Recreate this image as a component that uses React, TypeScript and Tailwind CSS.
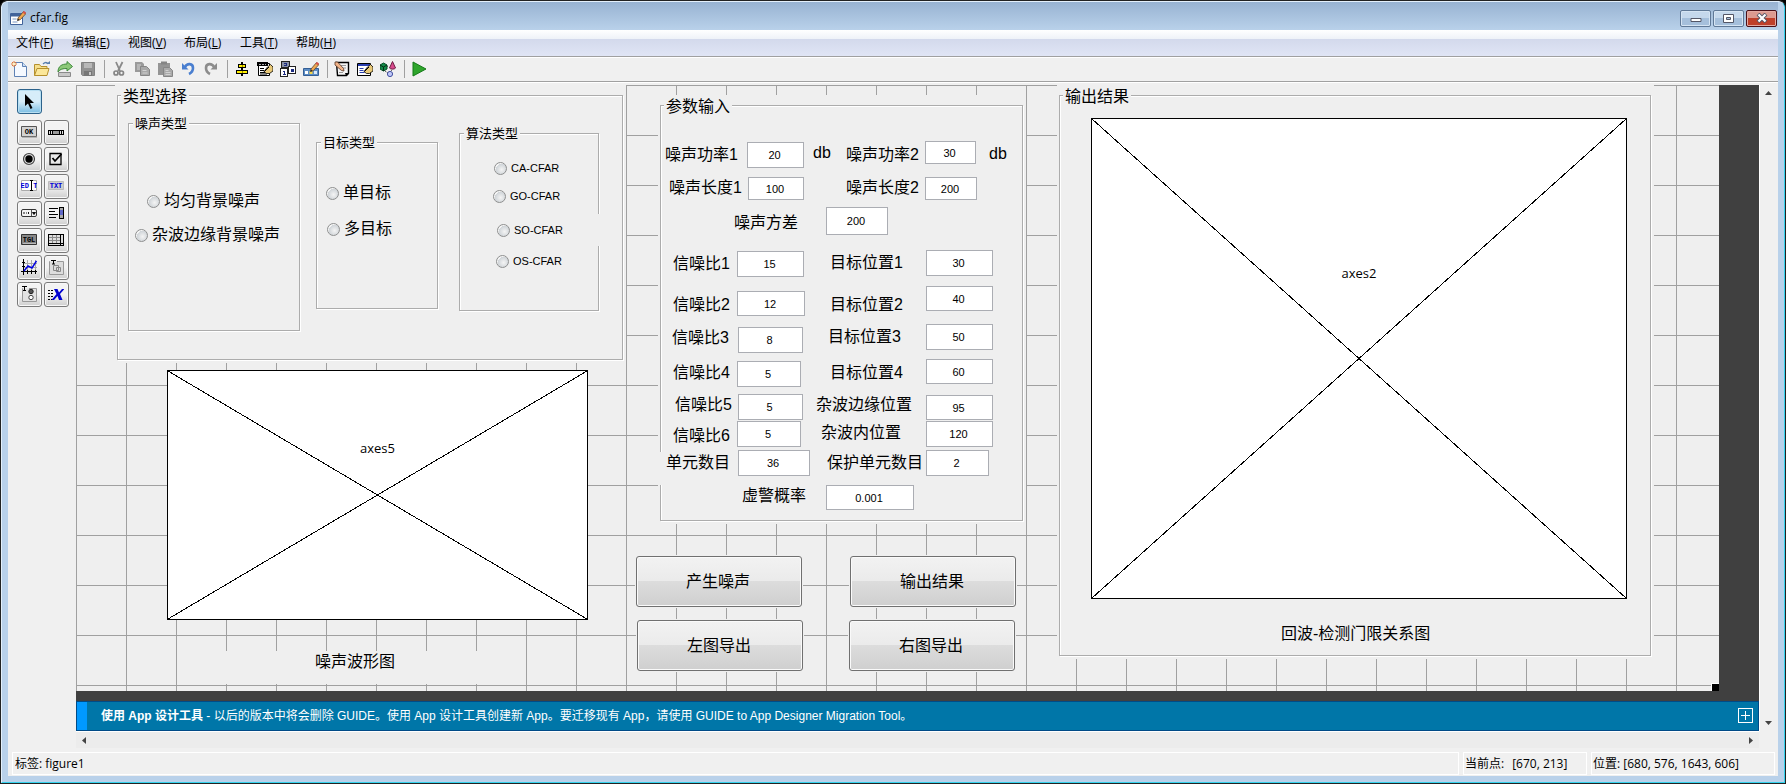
import React from "react";

const UI_FONT = "font-['Open_Sans','Noto_Sans_CJK_SC',sans-serif]";
const FORM_FONT = "font-['Liberation_Sans','Noto_Sans_CJK_SC',sans-serif]";

type Box = { x: number; y: number; w: number; h: number };

// Position of a component on the figure, in figure pixels
const place = ({ x, y, w, h }: Box): React.CSSProperties => ({
  left: x,
  top: y,
  width: w,
  height: h,
});

const menus = [
  ["文件", "F"],
  ["编辑", "E"],
  ["视图", "V"],
  ["布局", "L"],
  ["工具", "T"],
  ["帮助", "H"],
];

const Pencil = () => (
  <>
    <path d="M7.5 10.5 L8 8 L13.5 1.5 L16 3.5 L10.5 9.5 Z" fill="#f0a850" stroke="#5b4630" strokeWidth="0.8" />
    <path d="M12.5 2.5 L14 1 L16 2.6 L14.8 4.2 Z" fill="#d9534a" />
    <path d="M7.3 10.8 L8 8.6 L9.6 10 Z" fill="#222" />
  </>
);

const Form = () => (
  <>
    <path d="M1.5 2.5h11v12h-11z" fill="#fff" stroke="#000" />
    <path d="M3 7.5h4M3 9.5h4M3 11.5h5M3 13h7" stroke="#000" />
  </>
);

const Hand = () => (
  <>
    <path d="M7 10.500l3.500-4.500 3-2.500 2.500 2.500v4l-3.500 2.500h-3z" fill="#e8c878" stroke="#000" strokeWidth="0.8" />
    <path d="M7.500 10.500l4.500-4.500" stroke="#000" />
  </>
);

const toolIcons: Record<string, React.ReactNode> = {
  新建图窗: (
    <>
      <path d="M3.5 1.5h8l4 4v10h-12z" fill="#f5f9ff" stroke="#5f82b4" />
      <path d="M11.5 1.5v4h4" fill="#cfe0f5" stroke="#5f82b4" />
      <path d="M3 0v6M0 3h6M1 1l4 4M5 1l-4 4" stroke="#e0763a" strokeWidth="1" />
      <circle cx="3" cy="3" r="1.3" fill="#fff3c0" />
    </>
  ),
  打开图窗: (
    <>
      <path d="M.5 14.5v-11h5l1.5 2h6v3" fill="#f6df8c" stroke="#b58f2c" />
      <path d="M.5 14.5l2.5-7h12l-2 7z" fill="#fbe79a" stroke="#b58f2c" />
      <path d="M9 3c2-2 4-2 5 0" fill="none" stroke="#5a7fae" strokeWidth="1.3" />
      <path d="M12 3h4v-3z" fill="#5a7fae" />
    </>
  ),
  保存为: (
    <>
      <path d="M1.5 11.5h12v4h-12z" fill="#c8c8c8" stroke="#8a8a8a" />
      <path d="M1 11c0-6 4-8 9-8V0.5l5.5 5L10 10V7.5c-4 0-7 .5-9 3.5z" fill="#8cc878" stroke="#3f8a3c" />
    </>
  ),
  保存: (
    <>
      <path d="M1.5 1.5h13v13h-12l-1-1z" fill="#929292" stroke="#828282" />
      <path d="M4 2h8v5H4z" fill="#b8b8b8" />
      <path d="M4 10h8v5H4z" fill="#777" />
      <path d="M9 11h2v3H9z" fill="#c8c8c8" />
    </>
  ),
  剪切: (
    <>
      <path d="M5 1l4 9M11.5 1L7 10" stroke="#8a8a8a" strokeWidth="1.8" />
      <circle cx="5" cy="12" r="2" fill="none" stroke="#858585" strokeWidth="1.7" />
      <circle cx="10.5" cy="12" r="2" fill="none" stroke="#858585" strokeWidth="1.7" />
    </>
  ),
  复制: (
    <>
      <path d="M1 1h7l2 2v8H1z" fill="#9a9a9a" />
      <path d="M6.5 5.5h6l3 3v6h-9z" fill="#a8a8a8" stroke="#868686" />
      <path d="M3 4h4M3 6h3M3 8h3M8.500 9.500h4M8.500 12h5" stroke="#d2d2d2" />
    </>
  ),
  粘贴: (
    <>
      <path d="M1 2h12v12H1z" fill="#959595" />
      <path d="M4 0.500h6v3H4z" fill="#858585" />
      <path d="M6.500 6.500h6l3 3v6h-9z" fill="#aaa" stroke="#868686" />
      <path d="M8.500 9.500h3M8.500 11.500h5M8.500 13.500h5" stroke="#d0d0d0" />
    </>
  ),
  撤消: (
    <>
      <path d="M5 6c2-4 8-4 8 1 0 3-2 5-4 6" fill="none" stroke="#4a7fd0" strokeWidth="2.6" />
      <path d="M2 2v6.500h6.500z" fill="#4a7fd0" />
    </>
  ),
  重做: (
    <>
      <path d="M11 6c-2-4-8-4-8 1 0 3 2 5 4 6" fill="none" stroke="#8c8c8c" strokeWidth="2.600" />
      <path d="M14 2v6.500H7.500z" fill="#8c8c8c" />
    </>
  ),
  对齐对象: (
    <g shapeRendering="crispEdges">
      <path d="M7 1h2v14H7z" fill="#000" />
      <path d="M4.500 3.500h7v3h-7zM2.500 9.500h11v3h-11z" fill="#ffef00" stroke="#000" />
      <path d="M8 4v2M8 10v2" stroke="#a09000" />
    </g>
  ),
  菜单编辑器: (
    <>
      <Form />
      <path d="M0 1h11v4H0z" fill="#000" />
      <path d="M2 3.500h2M5 3.500h2M8 3.500h1" stroke="#aaa" />
      <Hand />
    </>
  ),
  "Tab 键顺序编辑器": (
    <g shapeRendering="crispEdges">
      <path d="M1.500.5h8v6h-8z" fill="#8890a8" stroke="#222" />
      <path d="M.5 7.500h7v8h-7zM8.500 5.500h7v7h-7z" fill="#fff" stroke="#222" />
      <path d="M3 10.500h1v3M3 13.500h3M11 8.500h2v1h-2v1h3M4 2.500h2v2H4" fill="none" stroke="#1a2a80" />
    </g>
  ),
  工具栏编辑器: (
    <>
      <path d="M.5 7.500h15v7H.5z" fill="#5c8cc4" stroke="#345f96" />
      <path d="M2 10h3v3H2z" fill="#fff" />
      <path d="M6.500 10h3v3h-3z" fill="#f5d648" />
      <path d="M11 10h3v3h-3z" fill="#d8e8f8" />
      <Pencil />
    </>
  ),
  编辑器: (
    <>
      <path d="M2.500 1.500h12v11l-2 2h-9z" fill="#f4f4f4" stroke="#000" strokeWidth="1.400" />
      <path d="M7 4.500h5M9 7h3M5 11.500h4" stroke="#999" />
      <path d="M1 1h2.500l6 6.500.5 2.500-2.500-.5L1 4z" fill="#f2b489" stroke="#553322" strokeWidth="0.800" />
      <path d="M11 12h4l-3 3z" fill="#000" />
    </>
  ),
  属性检查器: (
    <>
      <path d="M.5 2.500h13v12H.5z" fill="#fff" stroke="#000" />
      <path d="M1 3h12v2H1z" fill="#2a3fb0" />
      <path d="M2.500 7.500h4M2.500 9.500h4M2.500 11.500h5" stroke="#2a3fb0" />
      <Hand />
    </>
  ),
  对象浏览器: (
    <>
      <path d="M0 4l3.500-2 3.500 2v4L3.500 10 0 8z" fill="#128a48" stroke="#044d24" />
      <path d="M0 4l3.500 2L7 4M3.500 6v4" fill="none" stroke="#042d14" />
      <path d="M12.500.5l3 6.500c-1 1.500-5 1.500-6 0z" fill="#d84a8c" stroke="#6a1a40" />
      <circle cx="10" cy="13" r="2.600" fill="#c0c8f8" stroke="#4450a0" />
      <path d="M5 10l3 2M8 5l-1 1M12 9l-1 1" stroke="#333" strokeDasharray="1 1" />
    </>
  ),
  运行图窗: <path d="M2 1v14l13-7z" fill="#2fa52c" stroke="#157a18" />,
};

const toolbarGroups = [
  ["新建图窗", "打开图窗", "保存为", "保存"],
  ["剪切", "复制", "粘贴", "撤消", "重做"],
  ["对齐对象", "菜单编辑器", "Tab 键顺序编辑器", "工具栏编辑器"],
  ["编辑器", "属性检查器", "对象浏览器"],
  ["运行图窗"],
];

const IconText = ({ children, fill }: { children: string; fill: string }) => (
  <text
    x="8"
    y="10"
    fontSize="7"
    fontWeight="bold"
    textAnchor="middle"
    fontFamily="Liberation Mono, monospace"
    fill={fill}
  >
    {children}
  </text>
);

const paletteIcons: [string, React.ReactNode][] = [
  [
    "普通按钮",
    <>
      <path d="M.5 2.500h15v10H.5z" fill="#d2d2d2" stroke="#555" />
      <path d="M1 12.500h15v1H1z" fill="#888" />
      <IconText fill="#000">OK</IconText>
    </>,
  ],
  [
    "滑块",
    <g shapeRendering="crispEdges">
      <path d="M0 6h16v5H0z" fill="#000" />
      <path d="M1 7h1v3H1zM3 7h1v3H3zM12 7h1v3h-1zM14 7h1v3h-1z" fill="#ddd" />
      <path d="M5 7h6v3H5z" fill="#999" />
    </g>,
  ],
  [
    "单选按钮",
    <>
      <circle cx="8" cy="8" r="5.500" fill="#ddd" stroke="#444" strokeWidth="1.200" />
      <circle cx="8" cy="8" r="3.700" fill="#000" />
    </>,
  ],
  [
    "复选框",
    <>
      <path d="M2 2.500h11v11H2z" fill="#e8e8e8" stroke="#000" strokeWidth="1.300" />
      <path d="M4.500 7l2.500 3 6.500-7" fill="none" stroke="#000" strokeWidth="1.800" />
    </>,
  ],
  [
    "可编辑文本",
    <>
      <path d="M.5 2.500h15v10H.5z" fill="#fff" stroke="#aaa" />
      <IconText fill="#0000d8">ED T</IconText>
      <path d="M10.500 3v9M9 2.500h3M9 12.500h3" stroke="#000" />
    </>,
  ],
  [
    "静态文本",
    <>
      <path d="M.5 3.500h15v8H.5z" fill="#cfcfcf" stroke="#bbb" />
      <IconText fill="#0000d8">TXT</IconText>
    </>,
  ],
  [
    "弹出式菜单",
    <>
      <rect x="0.500" y="4.500" width="15" height="7" rx="1.500" fill="#f4f4f4" stroke="#333" />
      <path d="M10.500 5v6" stroke="#555" />
      <path d="M3 7v2M5 8h1M7.500 7v2M11.500 7.500h3l-1.500 2z" stroke="#000" strokeWidth="0.900" />
    </>,
  ],
  [
    "列表框",
    <g shapeRendering="crispEdges">
      <path d="M1 3.500h9M1 6.500h6M1 9.500h9M1 12.500h7" stroke="#000" />
      <path d="M11.500 2.500h4v11h-4z" fill="#aaa" stroke="#000" />
      <path d="M12 5h3v5h-3z" fill="#6068c8" />
    </g>,
  ],
  [
    "切换按钮",
    <>
      <path d="M.5 2.500h15v10H.5z" fill="#888" stroke="#333" />
      <path d="M2 11.500h13" stroke="#bbb" />
      <IconText fill="#000">TGL</IconText>
    </>,
  ],
  [
    "表",
    <g shapeRendering="crispEdges">
      <path d="M.5 2.500h15v11H.5z" fill="#ddd" stroke="#000" />
      <path d="M1 5.500h11M1 8.500h11M4.500 3v8M8.500 3v8" stroke="#888" />
      <path d="M12.500 2v12M1 11.500h14" stroke="#000" />
    </g>,
  ],
  [
    "坐标区",
    <>
      <path d="M6.500 1v13M10.500 1v13M14.500 1v13M3 4.500h13M3 8.500h13" stroke="#aaa" />
      <path d="M2.500 0v16M0 12.500h16M1 3.500h3M1 7.500h3M6.500 11v4M10.500 11v4M14.500 11v4" stroke="#000" />
      <path d="M3 12l4-5 4 2 4.500-7" fill="none" stroke="#0000e0" strokeWidth="1.500" />
    </>,
  ],
  [
    "面板",
    <>
      <path d="M2 2.500H1.500v13h14v-13H9" fill="#ddd" stroke="#999" />
      <path d="M5.500 6.500h5v5h-5zM8.500 8.500h4v4h-4z" fill="#ddd" stroke="#888" />
      <path d="M3 1.500h5M5.500 1v4M4 5h3" stroke="#000" />
    </>,
  ],
  [
    "按钮组",
    <>
      <path d="M2 2.500H1.500v13h14v-13H8" fill="#e2e2e2" stroke="#999" />
      <circle cx="10" cy="5.500" r="2.200" fill="#555" stroke="#222" />
      <circle cx="10" cy="11.500" r="2.200" fill="#fff" stroke="#444" />
      <path d="M1 .5h5M3.500 0v5M2 4.500h3" stroke="#000" />
    </>,
  ],
  [
    "ActiveX 控件",
    <>
      <path d="M0 4.500h5M0 7.500h5M0 10.500h5M0 13.500h4" stroke="#000" strokeDasharray="2 1" />
      <path d="M6 3h3.500l1.500 3.500L14 3h2.500l-4.500 5 2.500 6H11l-1.500-4-3.500 4H3.500l5-6z" fill="#0000d0" />
    </>,
  ],
];

const frames: (Box & { title: string; titleClass: string; bg: Box })[] = [
  { title: "类型选择", titleClass: "text-[16px] -top-[11px] left-[3px]", x: 41, y: 10, w: 506, h: 265, bg: { x: 39, y: 0, w: 511, h: 278 } },
  { title: "噪声类型", titleClass: "text-[13px] -top-3 left-1", x: 52, y: 38, w: 172, h: 208, bg: { x: 52, y: 38, w: 172, h: 208 } },
  { title: "目标类型", titleClass: "text-[13px] -top-3 left-1", x: 240, y: 57, w: 122, h: 167, bg: { x: 240, y: 57, w: 122, h: 167 } },
  { title: "算法类型", titleClass: "text-[13px] -top-3 left-1", x: 383, y: 48, w: 140, h: 178, bg: { x: 383, y: 48, w: 140, h: 178 } },
  { title: "参数输入", titleClass: "text-[16px] -top-[11px] left-[3px]", x: 584, y: 20, w: 363, h: 416, bg: { x: 582, y: 10, w: 368, h: 429 } },
  { title: "输出结果", titleClass: "text-[16px] -top-[11px] left-[3px]", x: 983, y: 10, w: 592, h: 561, bg: { x: 981, y: 0, w: 597, h: 574 } },
];

// Opaque control areas that hide the grid or a frame edge below them
const opaqueAreas: Box[] = [
  { x: 420, y: 129, w: 104, h: 32 },
  { x: 582, y: 367, w: 76, h: 33 },
  { x: 150, y: 566, w: 260, h: 33 },
];

const radios = [
  { group: "noise", text: "均匀背景噪声", x: 71, y: 116, size: "text-[16px]" },
  { group: "noise", text: "杂波边缘背景噪声", x: 59, y: 150, size: "text-[16px]" },
  { group: "target", text: "单目标", x: 250, y: 108, size: "text-[16px]" },
  { group: "target", text: "多目标", x: 251, y: 144, size: "text-[16px]" },
  { group: "algorithm", text: "CA-CFAR", x: 418, y: 83, size: "text-[11px]" },
  { group: "algorithm", text: "GO-CFAR", x: 417, y: 111, size: "text-[11px]" },
  { group: "algorithm", text: "SO-CFAR", x: 421, y: 145, size: "text-[11px]" },
  { group: "algorithm", text: "OS-CFAR", x: 420, y: 176, size: "text-[11px]" },
];

const fields = [
  { id: "power1", label: "噪声功率1", lx: 589, ly: 70, value: "20", x: 671, y: 57, w: 57, h: 26 },
  { id: "power2", label: "噪声功率2", lx: 770, ly: 70, value: "30", x: 849, y: 56, w: 51, h: 23 },
  { id: "length1", label: "噪声长度1", lx: 593, ly: 103, value: "100", x: 672, y: 92, w: 56, h: 23 },
  { id: "length2", label: "噪声长度2", lx: 770, ly: 103, value: "200", x: 849, y: 92, w: 52, h: 23 },
  { id: "variance", label: "噪声方差", lx: 658, ly: 138, value: "200", x: 750, y: 122, w: 62, h: 28 },
  { id: "snr1", label: "信噪比1", lx: 597, ly: 179, value: "15", x: 661, y: 166, w: 67, h: 26 },
  { id: "pos1", label: "目标位置1", lx: 754, ly: 178, value: "30", x: 850, y: 165, w: 67, h: 26 },
  { id: "snr2", label: "信噪比2", lx: 597, ly: 220, value: "12", x: 661, y: 206, w: 68, h: 25 },
  { id: "pos2", label: "目标位置2", lx: 754, ly: 220, value: "40", x: 850, y: 201, w: 67, h: 25 },
  { id: "snr3", label: "信噪比3", lx: 596, ly: 253, value: "8", x: 662, y: 242, w: 65, h: 26 },
  { id: "pos3", label: "目标位置3", lx: 752, ly: 252, value: "50", x: 850, y: 239, w: 67, h: 26 },
  { id: "snr4", label: "信噪比4", lx: 597, ly: 288, value: "5", x: 661, y: 276, w: 64, h: 26 },
  { id: "pos4", label: "目标位置4", lx: 754, ly: 288, value: "60", x: 850, y: 274, w: 67, h: 25 },
  { id: "snr5", label: "信噪比5", lx: 599, ly: 320, value: "5", x: 662, y: 309, w: 65, h: 26 },
  { id: "edge", label: "杂波边缘位置", lx: 740, ly: 320, value: "95", x: 850, y: 310, w: 67, h: 25 },
  { id: "snr6", label: "信噪比6", lx: 597, ly: 351, value: "5", x: 661, y: 336, w: 64, h: 26 },
  { id: "inner", label: "杂波内位置", lx: 745, ly: 348, value: "120", x: 850, y: 336, w: 67, h: 26 },
  { id: "cells", label: "单元数目", lx: 590, ly: 378, value: "36", x: 662, y: 365, w: 72, h: 26 },
  { id: "guard", label: "保护单元数目", lx: 751, ly: 378, value: "2", x: 850, y: 365, w: 63, h: 26 },
  { id: "pfa", label: "虚警概率", lx: 666, ly: 411, value: "0.001", x: 750, y: 400, w: 88, h: 25 },
];

const captions = [
  { text: "db", x: 737, y: 68 },
  { text: "db", x: 913, y: 69 },
  { text: "噪声波形图", x: 239, y: 577 },
  { text: "回波-检测门限关系图", x: 1205, y: 549 },
];

const pushButtons = [
  { text: "产生噪声", x: 560, y: 471, w: 166, h: 51 },
  { text: "输出结果", x: 774, y: 471, w: 166, h: 51 },
  { text: "左图导出", x: 561, y: 535, w: 166, h: 51 },
  { text: "右图导出", x: 773, y: 535, w: 166, h: 51 },
];

const axes = [
  { name: "axes5", x: 91, y: 285, w: 421, h: 250, labelY: 77 },
  { name: "axes2", x: 1015, y: 33, w: 536, h: 481, labelY: 154 },
];

const TitleBar = () => (
  <header className="flex h-7 shrink-0 items-center justify-between bg-gradient-to-b from-[#98b3d2] to-[#b9d1ea] pl-[2px] pr-px pt-1">
    <div className="flex items-center gap-1">
      <svg width="16" height="16" viewBox="0 0 16 16">
        <path d="M.5 3.500h12v11H.5z" fill="#fff" stroke="#41639a" />
        <path d="M1 4h11v2.500H1z" fill="#41639a" />
        <path d="M2.500 9h4M2.500 12h5" stroke="#7d99c4" />
        <Pencil />
      </svg>
      <h1 className="text-[12px] leading-4">cfar.fig</h1>
    </div>
    <div className="flex gap-[2px]">
      <button
        aria-label="最小化"
        className="flex h-[17px] w-[31px] items-center justify-center rounded-[2px] border border-[#5f7896] bg-gradient-to-b from-[#c5d8ec] from-50% to-[#a5bfdb] to-50% shadow-[inset_0_0_0_1px_#d5e4f3]"
      >
        <svg width="12" height="10" viewBox="0 0 12 10">
          <path d="M1 5.500h10v3H1z" fill="#fff" stroke="#535666" />
        </svg>
      </button>
      <button
        aria-label="最大化"
        className="flex h-[17px] w-[31px] items-center justify-center rounded-[2px] border border-[#5f7896] bg-gradient-to-b from-[#c5d8ec] from-50% to-[#a5bfdb] to-50% shadow-[inset_0_0_0_1px_#d5e4f3]"
      >
        <svg width="11" height="9" viewBox="0 0 11 9">
          <path d="M.5.5h10v8H.5z" fill="#fff" stroke="#535666" />
          <path d="M3.500 3.500h4v2h-4z" fill="#a5bfdb" stroke="#535666" />
        </svg>
      </button>
      <button
        aria-label="关闭"
        className="flex h-[17px] w-[31px] items-center justify-center rounded-[2px] border border-[#4a1018] bg-gradient-to-b from-[#dc9a90] from-50% to-[#bf402a] to-50% shadow-[inset_0_0_0_1px_#e3aaa2]"
      >
        <svg width="12" height="10" viewBox="0 0 12 10">
          <path d="M2 1l8 8M10 1l-8 8" stroke="#535666" strokeWidth="4" />
          <path d="M2.500 1.500l7 7M9.500 1.500l-7 7" stroke="#fff" strokeWidth="2.200" />
        </svg>
      </button>
    </div>
  </header>
);

const MenuBar = () => (
  <nav className="flex h-[26px] shrink-0 items-center gap-[18px] bg-[linear-gradient(#ffffff,#eef2f8_35%,#d3d9ec_35%,#e0e5f5)] pl-2">
    {menus.map(([name, key]) => (
      <button key={key} className="w-[38px] whitespace-nowrap text-left text-[12px] leading-4">
        {name}(<u>{key}</u>)
      </button>
    ))}
  </nav>
);

const Toolbar = () => (
  <div className="flex h-[29px] shrink-0 flex-col border-t border-[#a0a0a0]">
    <div className="flex h-[25px] shrink-0 items-start border-b border-t border-b-[#a0a0a0] border-t-white">
      {toolbarGroups.map((group, i) => (
        <React.Fragment key={group[0]}>
          {i > 0 && (
            <span className="flex h-[22px] w-2 items-center justify-center">
              <span className="h-[18px] w-px bg-[#a0a0a0]" />
            </span>
          )}
          {group.map((name) => (
            <button key={name} aria-label={name} className="flex h-[22px] w-[23px] items-center justify-center pr-px">
              <svg width="16" height="16" viewBox="0 0 16 16">
                {toolIcons[name]}
              </svg>
            </button>
          ))}
        </React.Fragment>
      ))}
    </div>
    <div className="h-px bg-white" />
  </div>
);

const Palette = () => (
  <aside className="flex w-[68px] shrink-0 flex-col gap-[6px] pl-[9px] pt-1">
    <button
      aria-label="选择"
      className="flex size-[25px] items-center justify-center rounded-[3px] border border-[#2c628b] bg-gradient-to-b from-[#d6edf9] from-50% to-[#79bde2] pb-px pr-px shadow-[inset_0_0_0_1px_#b8dff2]"
    >
      <svg width="16" height="16" viewBox="0 0 16 16">
        <path d="M4 1v12l3-2.500L9.500 16l2-1-2.500-5h4z" fill="#000" />
      </svg>
    </button>
    <div className="grid w-[52px] grid-cols-2 gap-[2px]">
      {paletteIcons.map(([name, icon]) => (
        <button
          key={name}
          aria-label={name}
          className="flex size-[25px] items-center justify-center rounded-[3px] border border-[#7a7a7a] bg-gradient-to-b from-[#f3f3f3] from-50% to-[#cfcfcf] pb-px pr-px shadow-[inset_0_0_0_1px_#f8f8f8]"
        >
          <svg width="16" height="16" viewBox="0 0 16 16">
            {icon}
          </svg>
        </button>
      ))}
    </div>
  </aside>
);

// The figure is a free canvas: each component sits where its author dropped it
const Figure = () => (
  <main
    className={`relative h-[606px] w-[1643px] shrink-0 bg-[#efefef] bg-[linear-gradient(to_right,#a0a0a0_1px,transparent_1px),linear-gradient(to_bottom,#a0a0a0_1px,transparent_1px)] bg-[size:50px_50px] ${FORM_FONT} text-black`}
  >
    {frames.map((f) => (
      <section key={f.title} aria-label={f.title}>
        <div className="absolute bg-[#efefef]" style={place(f.bg)} />
        <div
          className="absolute border border-[#acacac] shadow-[1px_1px_0_#fff,inset_1px_1px_0_#fff]"
          style={place(f)}
        >
          <h2 className={`absolute whitespace-nowrap bg-[#efefef] px-[2px] leading-6 ${f.titleClass}`}>{f.title}</h2>
        </div>
      </section>
    ))}

    {opaqueAreas.map((a) => (
      <div key={a.x} className="absolute bg-[#efefef]" style={place(a)} />
    ))}

    {radios.map((r) => (
      <label
        key={r.text}
        className={`absolute flex h-6 -translate-y-1/2 items-center gap-1 whitespace-nowrap ${r.size}`}
        style={{ left: r.x, top: r.y }}
      >
        <input
          type="radio"
          name={r.group}
          className="size-[13px] shrink-0 appearance-none rounded-full border border-[#8e8f8f] bg-[radial-gradient(circle_at_60%_60%,#f4f4f4,#cfd4d8_60%,#f4f4f4_62%)] checked:bg-[#2c628b]"
        />
        {r.text}
      </label>
    ))}

    {fields.map((f) => (
      <React.Fragment key={f.id}>
        <label
          htmlFor={f.id}
          className="absolute -translate-y-1/2 whitespace-nowrap text-[16px] leading-6"
          style={{ left: f.lx, top: f.ly }}
        >
          {f.label}
        </label>
        <input
          id={f.id}
          type="text"
          defaultValue={f.value}
          className="absolute border border-[#abadb3] bg-white pr-[2px] text-center text-[11px]"
          style={place(f)}
        />
      </React.Fragment>
    ))}

    {captions.map((c) => (
      <p
        key={c.x}
        className="absolute -translate-y-1/2 whitespace-nowrap text-[16px] leading-6"
        style={{ left: c.x, top: c.y }}
      >
        {c.text}
      </p>
    ))}

    {pushButtons.map((b) => (
      <button
        key={b.x}
        className="absolute rounded-[3px] border border-[#707070] bg-[linear-gradient(#f2f2f2,#ebebeb_48%,#dddddd_48%,#cfcfcf)] pr-[2px] text-[16px] shadow-[0_0_0_1px_#efefef,inset_0_0_0_1px_#fafafa]"
        style={place(b)}
      >
        {b.text}
      </button>
    ))}

    {axes.map((a) => (
      <div key={a.name} className="absolute border border-black bg-white" style={place(a)}>
        <svg className="h-full w-full" viewBox="0 0 100 100" preserveAspectRatio="none" shapeRendering="crispEdges">
          <path d="M0 0L100 100M100 0L0 100" stroke="#000" vectorEffect="non-scaling-stroke" />
        </svg>
        <span
          className={`absolute left-1/2 -translate-x-1/2 -translate-y-1/2 text-[13px] leading-4 ${UI_FONT}`}
          style={{ top: a.labelY }}
        >
          {a.name}
        </span>
      </div>
    ))}

    <span className="absolute bottom-0 right-0 size-2 border-l border-t border-white bg-black" />
  </main>
);

const Banner = () => (
  <div
    className={`flex h-[30px] shrink-0 items-stretch border border-[#004b87] bg-[#0076a8] ${FORM_FONT} text-[12px] text-white`}
  >
    <span className="w-[10px] shrink-0 bg-[#0099ff]" />
    <p className="flex-1 self-center whitespace-nowrap pl-[14px] leading-4">
      <b>使用 App 设计工具</b> - 以后的版本中将会删除 GUIDE。使用 App 设计工具创建新 App。要迁移现有 App，请使用{" "}
      <a href="#migrate">GUIDE to App Designer Migration Tool</a>。
    </p>
    <button aria-label="展开" className="mb-[2px] mr-[5px] flex size-[15px] items-center justify-center self-center border border-white">
      <svg width="9" height="9" viewBox="0 0 9 9" shapeRendering="crispEdges">
        <path d="M4.500 0v9M0 4.500h9" stroke="#fff" />
      </svg>
    </button>
  </div>
);

const ScrollArrow = ({ label, d }: { label: string; d: string }) => (
  <button aria-label={label} className="flex size-[17px] items-center justify-center">
    <svg width="7" height="7" viewBox="0 0 7 7">
      <path d={d} fill="#444" />
    </svg>
  </button>
);

const StatusBar = () => (
  <footer className="flex h-7 shrink-0 gap-1 pb-px pl-1 pr-[3px] pt-1 text-[12px] leading-[21px]">
    <p className="flex-1 border border-white pl-[2px]">标签: figure1</p>
    <p className="w-[124px] border border-white pl-px">
      当前点:<span className="ml-2">[670, 213]</span>
    </p>
    <p className="w-[184px] border border-white pl-px">位置: [680, 576, 1643, 606]</p>
  </footer>
);

const App: React.FC = () => {
  return (
    <div className="flex min-h-screen flex-col bg-black">
      <div
        className={`flex flex-1 flex-col overflow-hidden rounded-t-[7px] border border-[#222] ${UI_FONT} text-black`}
      >
        <div className="flex flex-1 flex-col rounded-t-[6px] border border-b-[#35d3ee] border-l-[#e4f0fb] border-r-[#35d3ee] border-t-[#e4f0fb] bg-[#b9d1ea] px-[6px] pb-[6px]">
          <TitleBar />
          <div className="flex flex-1 flex-col bg-[#f0f0f0]">
            <MenuBar />
            <Toolbar />
            <div className="flex flex-1">
              <Palette />
              <div className="flex min-w-0 flex-1 flex-col">
                <div className="flex-1 overflow-hidden bg-[#404040] pb-[10px]">
                  <Figure />
                </div>
                <Banner />
                <div className="flex h-[17px] shrink-0 items-center justify-between border-t border-white bg-[#ececec]">
                  <ScrollArrow label="向左滚动" d="M5 0v7L1 3.500z" />
                  <ScrollArrow label="向右滚动" d="M2 0v7l4-3.500z" />
                </div>
              </div>
              <div className="mb-[17px] mr-[2px] flex w-[17px] shrink-0 flex-col justify-between border-l border-white">
                <ScrollArrow label="向上滚动" d="M0 5h7L3.500 1z" />
                <ScrollArrow label="向下滚动" d="M0 2h7L3.500 6z" />
              </div>
            </div>
            <StatusBar />
          </div>
        </div>
      </div>
    </div>
  );
};

export default App;
